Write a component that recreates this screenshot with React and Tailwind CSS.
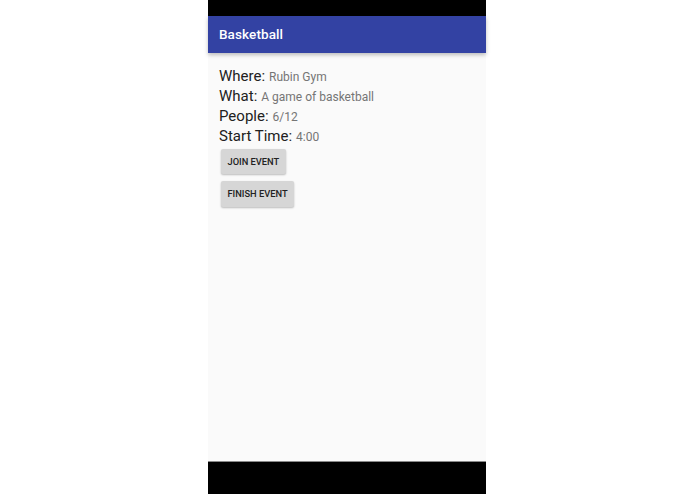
export default function App() {
  const rows = [
    ["Where:", "Rubin Gym"],
    ["What:", "A game of basketball"],
    ["People:", "6/12"],
    ["Start Time:", "4:00"],
  ];
  return (
    <div className="w-[695px] h-[494px] bg-white flex" style={{ fontFamily: "Roboto, 'Noto Sans', sans-serif" }}>
      <div className="ml-[208px] w-[278px] h-full flex flex-col bg-black">
        <div className="h-[16px] bg-black shrink-0" />
        <div className="flex-1 flex flex-col bg-[#fafafa] relative">
          <div className="h-[37px] bg-[#3342a3] flex items-center pl-[11px] shadow-[0_2px_4px_rgba(0,0,0,0.25)] relative z-10">
            <span className="text-white text-[13.5px] font-medium tracking-[0.1px]">Basketball</span>
          </div>
          <div className="flex flex-col pl-[11px] pt-[13px]">
            {rows.map(([k, v]) => (
              <div key={k} className="leading-[20px] h-[20px] whitespace-nowrap">
                <span className="text-[15px] text-[#212121]">{k}</span>{" "}
                <span className="text-[12px] text-[#757575]">{v}</span>
              </div>
            ))}
            <div className="flex flex-col items-start gap-[7px] mt-[3px] ml-[2px]">
              <button className="h-[25px] px-[6.5px] bg-[#d6d6d6] rounded-[2px] shadow-[0_1px_2px_rgba(0,0,0,0.25)] text-[9.3px] font-medium text-[#222]">
                JOIN EVENT
              </button>
              <button className="h-[26px] px-[6.5px] bg-[#d6d6d6] rounded-[2px] shadow-[0_1px_2px_rgba(0,0,0,0.25)] text-[9.3px] font-medium text-[#222]">
                FINISH EVENT
              </button>
            </div>
          </div>
        </div>
        <div className="h-[33px] bg-black shrink-0 border-t border-[#8a8a8a]" />
      </div>
    </div>
  );
}
